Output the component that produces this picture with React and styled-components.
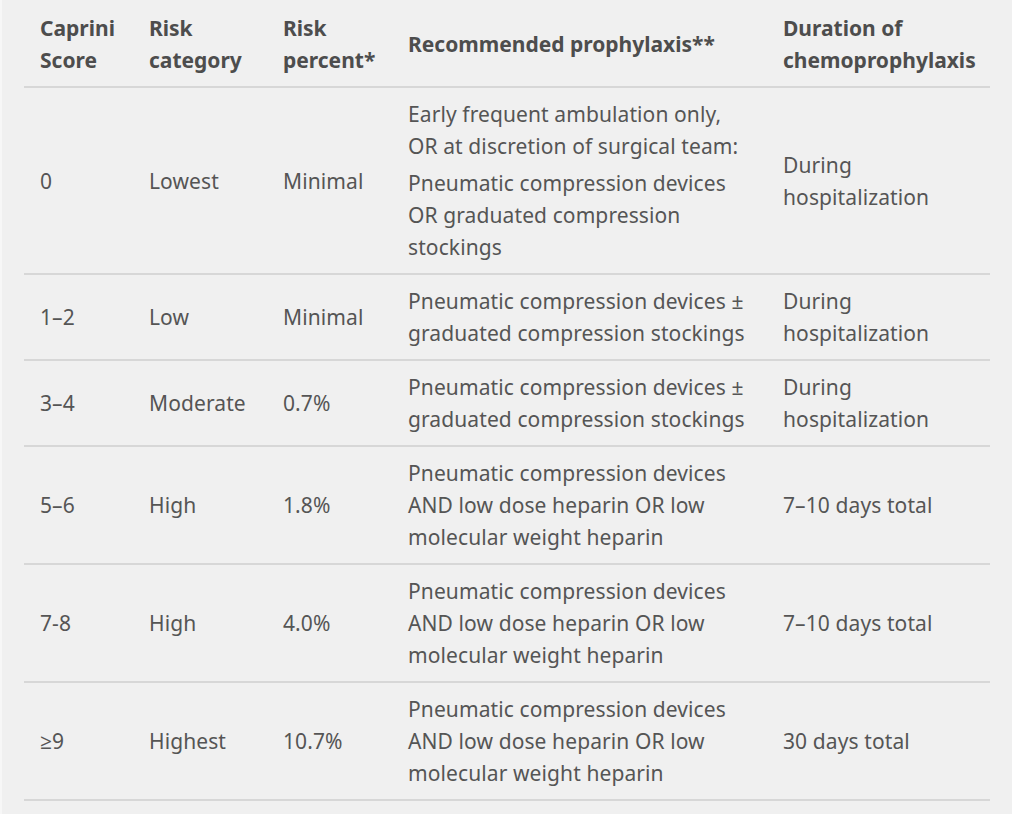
import React from "react";
import styled, { createGlobalStyle } from "styled-components";

const GlobalStyle = createGlobalStyle`
  html, body {
    margin: 0;
    padding: 0;
    background: #f0f0f0;
  }
  body {
    font-family: "Noto Sans", "Open Sans", sans-serif;
    color: #555;
  }
`;

const Page = styled.div`
  min-height: 814px;
  padding: 2px 0 0 22px;
  border-left: 2px solid #f7f7f7;
  box-sizing: border-box;
`;

const Table = styled.table`
  width: 966px;
  border-collapse: collapse;
  table-layout: fixed;
  font-size: 21px;
  line-height: 32px;
`;

const HeadCell = styled.th`
  width: ${(p) => p.w}px;
  padding: 10px 16px;
  text-align: left;
  vertical-align: middle;
  font-weight: 700;
  color: #4d4d4d;
  border-bottom: 2px solid #d7d7d7;
  box-sizing: border-box;
  white-space: nowrap;
`;

const Row = styled.tr`
  border-bottom: 2px solid #d7d7d7;
`;

const Cell = styled.td`
  padding: 10px 16px;
  vertical-align: middle;
  color: #555;
  white-space: nowrap;
  letter-spacing: 0.1px;
`;

const Para = styled.p`
  margin: 0;
  & + & {
    margin-top: 5px;
  }
`;

// each entry is a list of lines, broken where the reference breaks them
const Lines = ({ lines }) =>
  lines.map((l, j) => (
    <React.Fragment key={j}>
      {j > 0 && <br />}
      {l}
    </React.Fragment>
  ));

const columns = [
  { w: 109, label: ["Caprini", "Score"] },
  { w: 134, label: ["Risk", "category"] },
  { w: 125, label: ["Risk", "percent*"] },
  { w: 375, label: ["Recommended prophylaxis**"] },
  { w: 223, label: ["Duration of", "chemoprophylaxis"] },
];

const HOSPITAL = ["During", "hospitalization"];
const PCD_PLUS = [["Pneumatic compression devices ±", "graduated compression stockings"]];
const PCD_AND = [["Pneumatic compression devices", "AND low dose heparin OR low", "molecular weight heparin"]];

const rows = [
  {
    score: "0",
    category: "Lowest",
    percent: "Minimal",
    prophylaxis: [
      ["Early frequent ambulation only,", "OR at discretion of surgical team:"],
      ["Pneumatic compression devices", "OR graduated compression", "stockings"],
    ],
    duration: HOSPITAL,
  },
  { score: "1–2", category: "Low", percent: "Minimal", prophylaxis: PCD_PLUS, duration: HOSPITAL },
  { score: "3–4", category: "Moderate", percent: "0.7%", prophylaxis: PCD_PLUS, duration: HOSPITAL },
  { score: "5–6", category: "High", percent: "1.8%", prophylaxis: PCD_AND, duration: ["7–10 days total"] },
  { score: "7-8", category: "High", percent: "4.0%", prophylaxis: PCD_AND, duration: ["7–10 days total"] },
  { score: "≥9", category: "Highest", percent: "10.7%", prophylaxis: PCD_AND, duration: ["30 days total"] },
];

export default function App() {
  return (
    <Page>
      <GlobalStyle />
      <Table>
        <thead>
          <tr>
            {columns.map((c, i) => (
              <HeadCell key={i} w={c.w}>
                <Lines lines={c.label} />
              </HeadCell>
            ))}
          </tr>
        </thead>
        <tbody>
          {rows.map((r, i) => (
            <Row key={i}>
              <Cell>{r.score}</Cell>
              <Cell>{r.category}</Cell>
              <Cell>{r.percent}</Cell>
              <Cell>
                {r.prophylaxis.map((p, j) => (
                  <Para key={j}>
                    <Lines lines={p} />
                  </Para>
                ))}
              </Cell>
              <Cell>
                <Lines lines={r.duration} />
              </Cell>
            </Row>
          ))}
        </tbody>
      </Table>
    </Page>
  );
}
